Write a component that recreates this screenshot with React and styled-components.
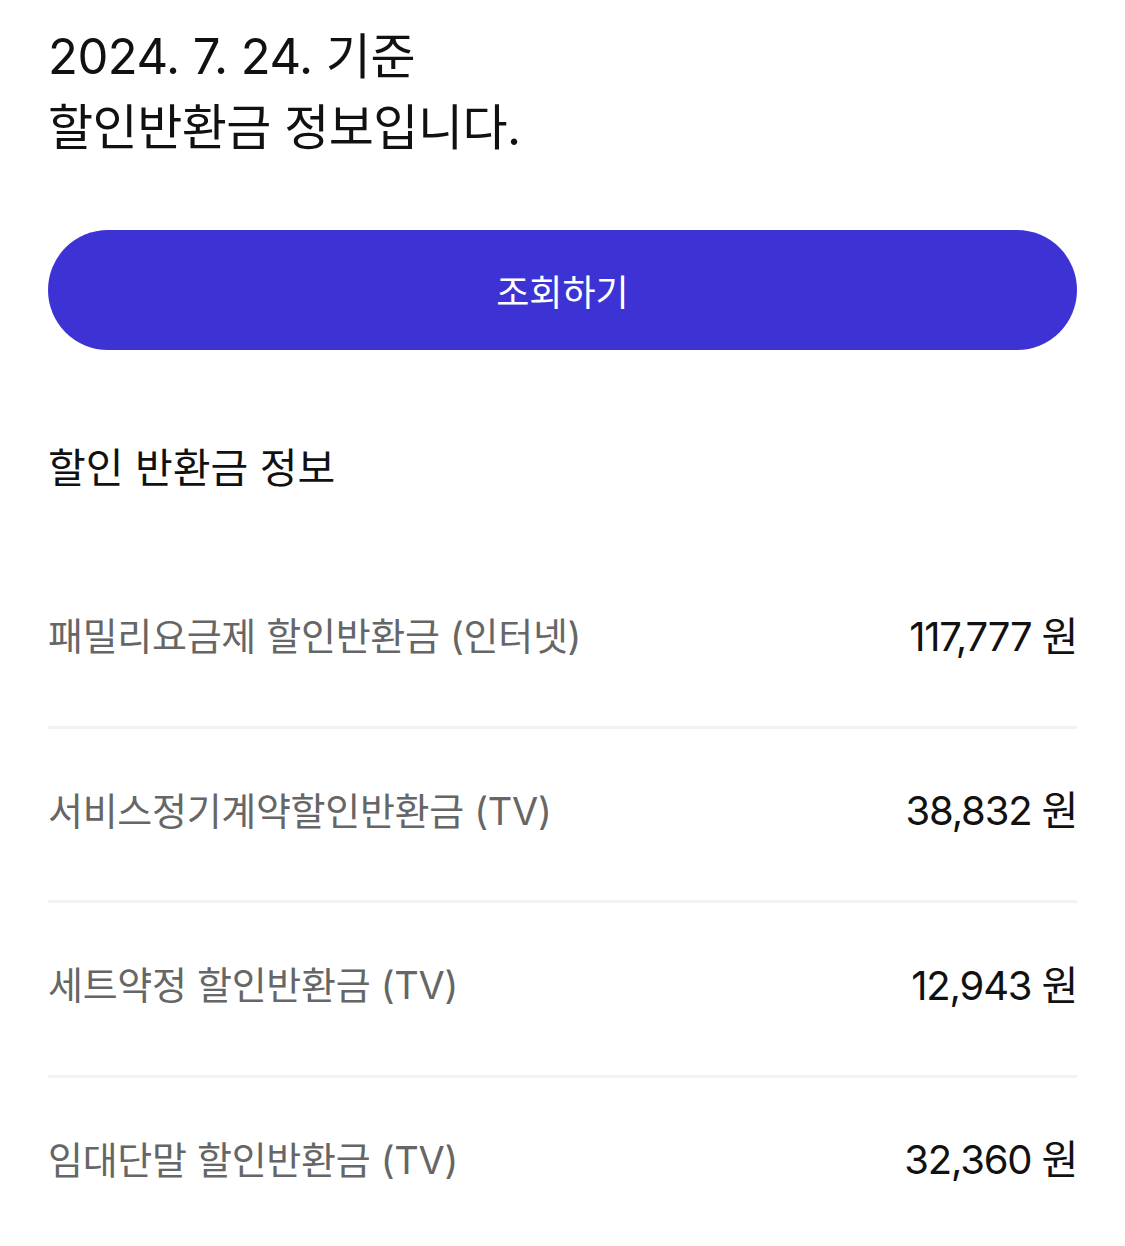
import React from 'react'
import styled, { createGlobalStyle } from 'styled-components'

const Global = createGlobalStyle`
  body {
    margin: 0;
    background: #fff;
    font-family: "Inter", "Noto Sans CJK KR", "Noto Sans", sans-serif;
  }
`

const Page = styled.div`
  padding: 21px 48px 0 48px;
`

const Title = styled.h1`
  margin: 0;
  font-size: 49px;
  font-weight: 400;
  line-height: 71px;
  color: #111;
  letter-spacing: -0.5px;
`

const SearchButton = styled.button`
  display: block;
  width: 100%;
  height: 120px;
  margin-top: 67px;
  border: none;
  border-radius: 60px;
  background: #3d33d5;
  color: #fff;
  font-family: inherit;
  font-size: 36px;
`

const SectionTitle = styled.h2`
  margin: 90px 0 0 0;
  font-size: 41px;
  font-weight: 400;
  line-height: 56px;
  color: #111;
`

const List = styled.ul`
  list-style: none;
  margin: 58px 0 0 0;
  padding: 0;
`

const Row = styled.li`
  display: flex;
  justify-content: space-between;
  align-items: center;
  height: 159.5px;
  padding-bottom: 12px;
  border-bottom: 3px solid ${p => (p.last ? 'transparent' : '#f2f2f2')};
`

const Label = styled.span`
  font-size: 38px;
  color: #666;
  letter-spacing: -0.3px;
`

const Value = styled.span`
  font-size: 40px;
  color: #111;
  letter-spacing: -1.2px;
`

const items = [
  ['패밀리요금제 할인반환금 (인터넷)', '117,777 원'],
  ['서비스정기계약할인반환금 (TV)', '38,832 원'],
  ['세트약정 할인반환금 (TV)', '12,943 원'],
  ['임대단말 할인반환금 (TV)', '32,360 원'],
]

const App = () => {
  return (
    <Page>
      <Global />
      <Title>
        2024. 7. 24. 기준
        <br />
        할인반환금 정보입니다.
      </Title>
      <SearchButton>조회하기</SearchButton>
      <SectionTitle>할인 반환금 정보</SectionTitle>
      <List>
        {items.map(([label, value], i) => (
          <Row key={label} last={i === items.length - 1}>
            <Label>{label}</Label>
            <Value>{value}</Value>
          </Row>
        ))}
      </List>
    </Page>
  )
}

export default App
